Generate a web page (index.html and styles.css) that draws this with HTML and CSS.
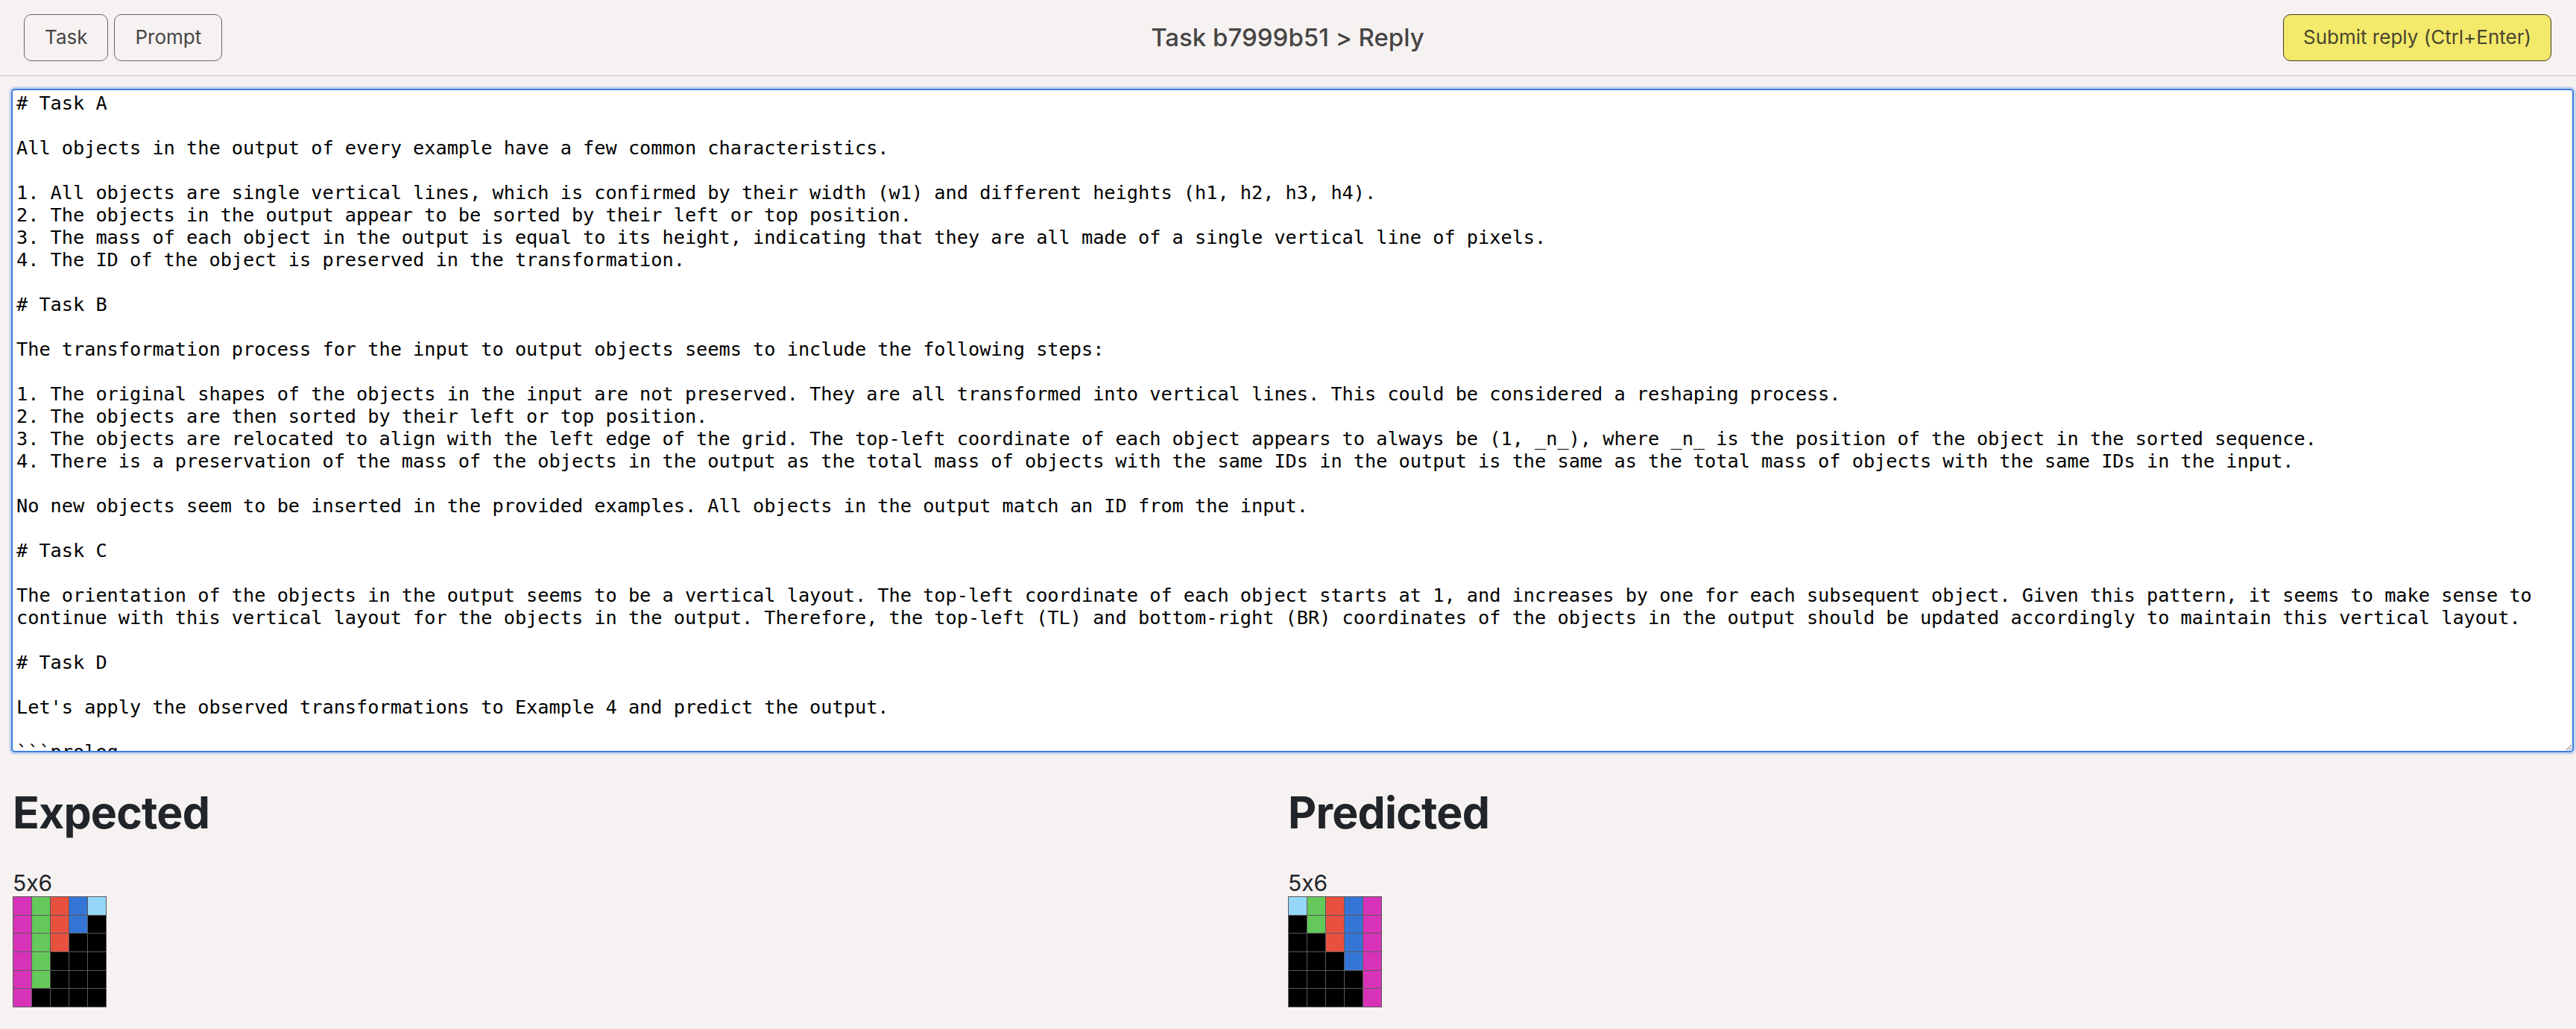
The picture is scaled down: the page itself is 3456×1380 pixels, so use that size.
FILE: index.html
```html
<!DOCTYPE html>
<html lang="en">
<head>
<meta charset="utf-8">
<title>Task b7999b51 &gt; Reply</title>
<link rel="stylesheet" href="styles.css">
</head>
<body>
<header class="topbar">
  <div class="nav-left">
    <button class="btn">Task</button>
    <button class="btn">Prompt</button>
  </div>
  <div class="title">Task b7999b51 &gt; Reply</div>
  <div class="nav-right">
    <button class="btn btn-submit">Submit reply (Ctrl+Enter)</button>
  </div>
</header>
<main class="content">
<textarea class="reply" spellcheck="false">
# Task A

All objects in the output of every example have a few common characteristics.

1. All objects are single vertical lines, which is confirmed by their width (w1) and different heights (h1, h2, h3, h4).
2. The objects in the output appear to be sorted by their left or top position.
3. The mass of each object in the output is equal to its height, indicating that they are all made of a single vertical line of pixels.
4. The ID of the object is preserved in the transformation.

# Task B

The transformation process for the input to output objects seems to include the following steps:

1. The original shapes of the objects in the input are not preserved. They are all transformed into vertical lines. This could be considered a reshaping process.
2. The objects are then sorted by their left or top position.
3. The objects are relocated to align with the left edge of the grid. The top-left coordinate of each object appears to always be (1, _n_), where _n_ is the position of the object in the sorted sequence.
4. There is a preservation of the mass of the objects in the output as the total mass of objects with the same IDs in the output is the same as the total mass of objects with the same IDs in the input.

No new objects seem to be inserted in the provided examples. All objects in the output match an ID from the input.

# Task C

The orientation of the objects in the output seems to be a vertical layout. The top-left coordinate of each object starts at 1, and increases by one for each subsequent object. Given this pattern, it seems to make sense to continue with this vertical layout for the objects in the output. Therefore, the top-left (TL) and bottom-right (BR) coordinates of the objects in the output should be updated accordingly to maintain this vertical layout.

# Task D

Let's apply the observed transformations to Example 4 and predict the output.

```prolog
output_objects([
</textarea>

  <section class="compare">
    <div class="panel">
      <h2 class="panel-title">Expected</h2>
      <div class="dims">5x6</div>
      <div class="grid">
        <span class="c m"></span><span class="c g"></span><span class="c r"></span><span class="c b"></span><span class="c l"></span>
        <span class="c m"></span><span class="c g"></span><span class="c r"></span><span class="c b"></span><span class="c k"></span>
        <span class="c m"></span><span class="c g"></span><span class="c r"></span><span class="c k"></span><span class="c k"></span>
        <span class="c m"></span><span class="c g"></span><span class="c k"></span><span class="c k"></span><span class="c k"></span>
        <span class="c m"></span><span class="c g"></span><span class="c k"></span><span class="c k"></span><span class="c k"></span>
        <span class="c m"></span><span class="c k"></span><span class="c k"></span><span class="c k"></span><span class="c k"></span>
      </div>
    </div>
    <div class="panel">
      <h2 class="panel-title">Predicted</h2>
      <div class="dims">5x6</div>
      <div class="grid">
        <span class="c l"></span><span class="c g"></span><span class="c r"></span><span class="c b"></span><span class="c m"></span>
        <span class="c k"></span><span class="c g"></span><span class="c r"></span><span class="c b"></span><span class="c m"></span>
        <span class="c k"></span><span class="c k"></span><span class="c r"></span><span class="c b"></span><span class="c m"></span>
        <span class="c k"></span><span class="c k"></span><span class="c k"></span><span class="c b"></span><span class="c m"></span>
        <span class="c k"></span><span class="c k"></span><span class="c k"></span><span class="c k"></span><span class="c m"></span>
        <span class="c k"></span><span class="c k"></span><span class="c k"></span><span class="c k"></span><span class="c m"></span>
      </div>
    </div>
  </section>
</main>
</body>
</html>
```

FILE: styles.css
```css
* { box-sizing: border-box; }

html, body {
  margin: 0;
  padding: 0;
  background: #f7f2f2;
  font-family: Inter, "Noto Sans", "Liberation Sans", sans-serif;
  font-feature-settings: "calt" 0;
  color: #212529;
}

.topbar {
  display: grid;
  grid-template-columns: 1fr auto 1fr;
  align-items: center;
  height: 102px;
  padding: 0 33px 1px 32px;
  border-bottom: 1px solid #c9c7c7;
}

.nav-left {
  display: flex;
  gap: 8px;
}

.nav-right {
  display: flex;
  justify-content: flex-end;
}

.btn {
  font-family: Inter, "Noto Sans", sans-serif;
  font-feature-settings: "calt" 0;
  font-size: 26px;
  color: #454545;
  background: transparent;
  border: 1.5px solid #666;
  border-radius: 10px;
  height: 63px;
  padding: 0 27px;
  line-height: 1;
}

.btn-submit {
  background: #f3e96a;
  border-color: #3d3a22;
  color: #48452f;
  padding: 0 26px;
}

.title {
  font-size: 33px;
  font-weight: 500;
  color: #474545;
  text-align: center;
}

.content {
  display: flex;
  flex-direction: column;
  padding: 17px 0 0 15px;
}

.reply {
  display: block;
  width: calc(100% - 3px);
  height: 890px;
  margin: 0;
  padding: 3px 5px;
  font-family: "DejaVu Sans Mono", "Liberation Mono", monospace;
  font-size: 25.25px;
  line-height: 30px;
  color: #000;
  background: #fff;
  border: 2px solid #3b7be0;
  border-radius: 5px;
  box-shadow: 0 0 0 3px rgba(120, 165, 235, 0.35);
  outline: none;
  overflow: hidden;
  resize: both;
  white-space: pre-wrap;
}

.compare {
  display: grid;
  grid-template-columns: 1fr 1fr;
  padding: 45px 17px 0 2px;
}

.panel {
  display: flex;
  flex-direction: column;
  align-items: flex-start;
}

.panel-title {
  margin: 0;
  font-size: 59px;
  font-weight: 700;
  line-height: 72px;
  color: #212529;
  letter-spacing: -0.8px;
}

.dims {
  margin-top: 40px;
  font-size: 30px;
  line-height: 36px;
  color: #212529;
}

.grid {
  display: grid;
  grid-template-columns: repeat(5, 24px);
  grid-auto-rows: 23.7px;
  gap: 1px;
  padding: 1px;
  background: #5a5a5a;
}

.c { display: block; }
.k { background: #000; }
.m { background: #d733b9; }
.g { background: #64c95a; }
.r { background: #e8503f; }
.b { background: #3575d6; }
.l { background: #95d7f8; }
```
